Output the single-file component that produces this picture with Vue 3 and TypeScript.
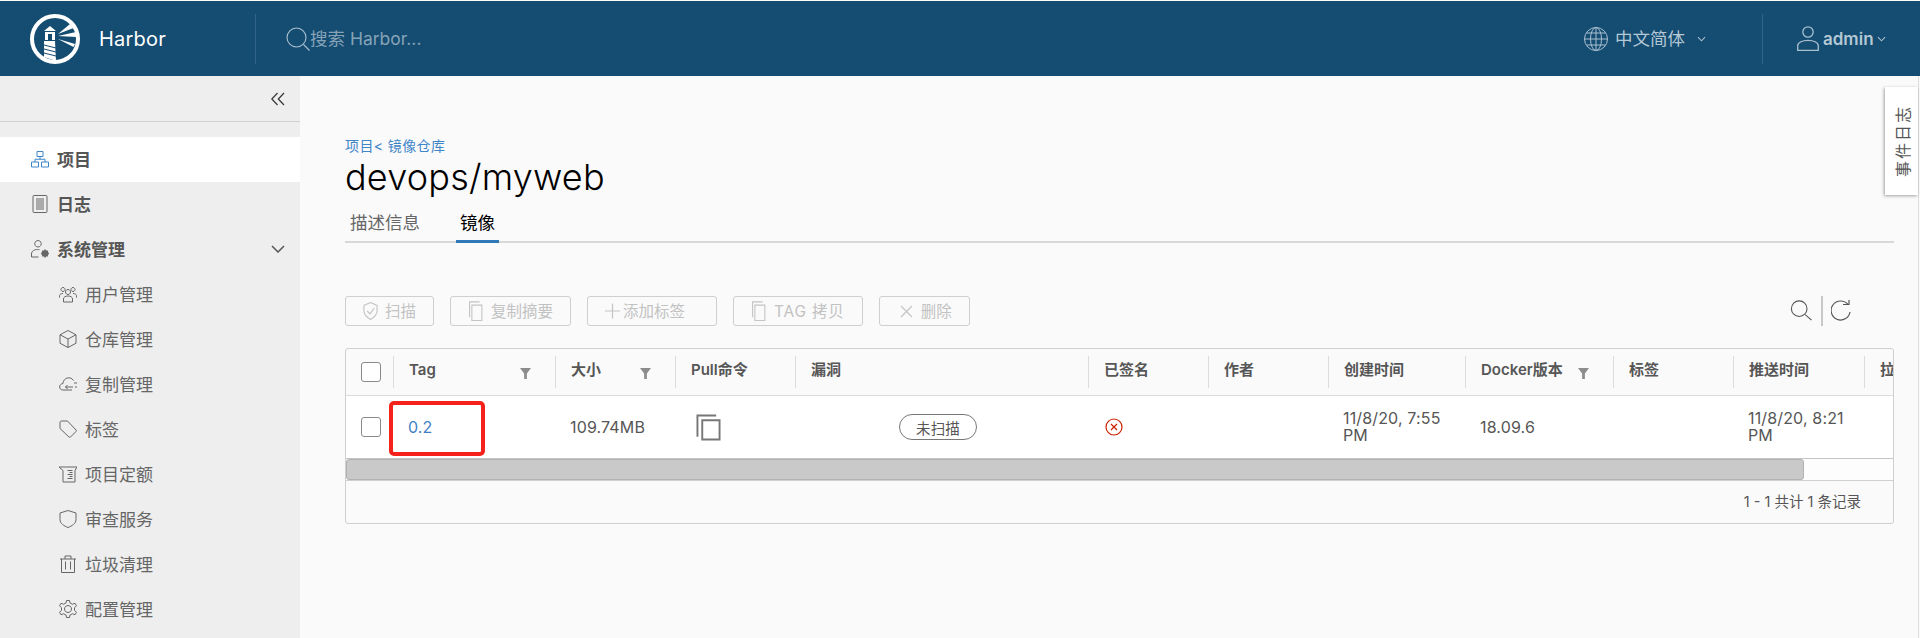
<script setup lang="ts">
interface NavItem {
  label: string
  icon: string
  sub?: boolean
  active?: boolean
  arrow?: boolean
}

interface Column {
  label: string
  width: number
  filter?: boolean
}

const navItems: NavItem[] = [
  { label: '项目', icon: 'project', active: true },
  { label: '日志', icon: 'log' },
  { label: '系统管理', icon: 'admin', arrow: true },
  { label: '用户管理', icon: 'users', sub: true },
  { label: '仓库管理', icon: 'box', sub: true },
  { label: '复制管理', icon: 'cloud', sub: true },
  { label: '标签', icon: 'tag', sub: true },
  { label: '项目定额', icon: 'quota', sub: true },
  { label: '审查服务', icon: 'shield', sub: true },
  { label: '垃圾清理', icon: 'trash', sub: true },
  { label: '配置管理', icon: 'gear', sub: true }
]

// 图标都按 36x36 画
const icons: Record<string, string[]> = {
  project: ['M12 3h12v10H12z', 'M1 24h14v10H1z', 'M21 24h14v10H21z', 'M8 24v-5.500h20V24', 'M18 13v5.500'],
  log: ['M6 1h24a2 2 0 0 1 2 2v30a2 2 0 0 1-2 2H6a2 2 0 0 1-2-2V3a2 2 0 0 1 2-2z', 'M10 8h16M10 12h16M10 16h16M10 20h16M10 24h16M10 28h16'],
  admin: ['M14 14a6.500 6.500 0 1 0-.01 0z', 'M1 34v-6c0-6 6-9 12-9 2 0 3 .2 4 .5M1 34h14'],
  users: ['M18 19a5 5 0 1 0-.01 0z', 'M9 34v-6c0-4 4-6 9-6s9 2 9 6v6z', 'M8 13a4 4 0 1 0-.01 0zM1 25v-4c0-2 3-4 7-4', 'M28 13a4 4 0 1 0-.01 0zM35 25v-4c0-2-3-4-7-4'],
  box: ['M18 1l16 8.500v17L18 35 2 26.500v-17z', 'M2 9.500L18 18l16-8.500M18 18v17'],
  cloud: ['M26 30H8c-9 0-9-12 0-13 0-11 15-16 21-6', 'M13 24h15M17 20l-4 4 4 4', 'M30 16h6M32 24h4'],
  tag: ['M2 5a3 3 0 0 1 3-3h12l17 18a2 2 0 0 1 0 3L23 34a2 2 0 0 1-3 0L2 17z', 'M8 8.500h.01'],
  quota: ['M0 4h36l-4 7v23H8V11z', 'M17 11h10M21 15h6M17 19h10M21 23h6M17 27h10'],
  shield: ['M18 1l16 5v13c0 8-8 13-16 16-8-3-16-8-16-16V6z'],
  trash: ['M2 8h32M12 8V2h12v6', 'M5 8v27h26V8', 'M13 13v16M23 13v16'],
  gear: ['M15 1h6l1 5 5 2.500 5-2 3 5-4 4v5l4 4-3 5-5-2-5 2.500-1 5h-6l-1-5-5-2.500-5 2-3-5 4-4v-5l-4-4 3-5 5 2L14 6z', 'M18 25a7 7 0 1 0-.01 0z']
}

const buttons = [
  { label: '扫描', icon: 'scan' },
  { label: '复制摘要', icon: 'copy' },
  { label: '添加标签', icon: 'plus' },
  { label: 'TAG 拷贝', icon: 'copy', wide: true },
  { label: '删除', icon: 'close' }
]

const columns: Column[] = [
  { label: 'Tag', width: 162, filter: true },
  { label: '大小', width: 120, filter: true },
  { label: 'Pull命令', width: 120 },
  { label: '漏洞', width: 293 },
  { label: '已签名', width: 120 },
  { label: '作者', width: 120 },
  { label: '创建时间', width: 137 },
  { label: 'Docker版本', width: 148, filter: true },
  { label: '标签', width: 120 },
  { label: '推送时间', width: 131 },
  { label: '拉取时间', width: 120 }
]

const colWidth = (c: Column) => ({ width: c.width + 'px' })
</script>

<template>
  <div class="page">
    <header class="topbar">
      <svg class="logo" viewBox="0 0 50 50">
        <circle cx="25" cy="25" r="23" fill="none" stroke="#fff" stroke-width="4" />
        <path d="M14 17l6-5 6 5z" fill="#fff" />
        <path fill-rule="evenodd" d="M15 18h10v8H15zM18 20v6h4v-6z" fill="#fff" />
        <path d="M14 27h11l1 20-12-4z" fill="#fff" />
        <path d="M14 31l12 3M14 35l12 3M14 39l12 3" stroke="#154c72" stroke-width="1" />
        <path d="M28 20l12-10 3.500 4zM28 22l18-4 1 5zM28 25l17 5-1.500 3z" fill="#fff" />
      </svg>
      <span class="brand">Harbor</span>
      <div class="search">
        <svg class="search-icon" viewBox="0 0 24 24">
          <circle cx="10.500" cy="10.500" r="9.500" />
          <path d="M17.500 17.500l6 6" />
        </svg>
        <span class="lift">搜索 Harbor...</span>
      </div>
      <div class="lang">
        <svg class="globe" viewBox="0 0 24 24">
          <circle cx="12" cy="12" r="11.500" />
          <ellipse cx="12" cy="12" rx="5.500" ry="11.500" />
          <path d="M12 .5v23M.5 12h23M2.500 6h19M2.500 18h19" />
        </svg>
        <span class="lift">中文简体</span>
        <svg class="caret lang-caret" viewBox="0 0 10 6"><path d="M1 1l4 4 4-4" /></svg>
      </div>
      <div class="account">
        <svg class="user-icon" viewBox="0 0 22 25">
          <circle cx="11" cy="6" r="5.200" />
          <path d="M.7 24.300v-4.500c0-3.500 5-5.500 10.300-5.500s10.300 2 10.300 5.500v4.500z" />
        </svg>
        <span>admin</span>
        <svg class="caret" viewBox="0 0 10 6"><path d="M1 1l4 4 4-4" /></svg>
      </div>
    </header>

    <div class="body">
      <aside class="sidebar">
        <div class="collapse">
          <svg viewBox="0 0 14 14"><path d="M6.500 1L.8 7l5.700 6M13 1L7.300 7l5.700 6" /></svg>
        </div>
        <nav class="nav">
          <div
            v-for="item in navItems"
            :key="item.label"
            class="nav-item"
            :class="{ active: item.active, sub: item.sub }"
          >
            <svg class="nav-icon" viewBox="0 0 36 36">
              <path v-for="d in icons[item.icon]" :key="d" :d="d" />
              <g v-if="item.icon === 'admin'" class="admin-gear">
                <circle cx="28" cy="27" r="5" />
                <path d="M28 19v3M28 32v3M20 27h3M33 27h3M22.500 21.500l2 2M31.500 30.500l2 2M33.500 21.500l-2 2M24.500 30.500l-2 2" />
              </g>
            </svg>
            <span>{{ item.label }}</span>
            <svg v-if="item.arrow" class="nav-arrow" viewBox="0 0 14 8"><path d="M1 1l6 6 6-6" /></svg>
          </div>
        </nav>
      </aside>

      <main class="content">
        <div class="crumb">项目&lt; 镜像仓库</div>
        <h1 class="title">devops/myweb</h1>
        <div class="tabs">
          <span class="tab">描述信息</span>
          <span class="tab current">镜像</span>
        </div>

        <div class="toolbar">
          <button v-for="b in buttons" :key="b.label" class="tool-btn" :class="[b.icon, { wide: b.wide }]">
            <svg v-if="b.icon === 'scan'" class="btn-icon" viewBox="0 0 16 20">
              <path d="M8 1l7 3v6c0 4-3.500 7-7 9-3.500-2-7-5-7-9V4z" />
              <path d="M4.500 10l3 3 4.500-6" />
            </svg>
            <svg v-else-if="b.icon === 'copy'" class="btn-icon" viewBox="0 0 15 22">
              <path d="M12 1H1v17" />
              <path d="M3.500 4.500h11v17h-11z" />
            </svg>
            <svg v-else-if="b.icon === 'plus'" class="btn-icon" viewBox="0 0 15 15">
              <path d="M7.500 0v15M0 7.500h15" />
            </svg>
            <svg v-else class="btn-icon small" viewBox="0 0 13 13">
              <path d="M1 1l11 11M12 1L1 12" />
            </svg>
            <span>{{ b.label }}</span>
          </button>
          <div class="tool-right">
            <svg class="tool-search" viewBox="0 0 24 24">
              <circle cx="9.500" cy="9.500" r="8.500" />
              <path d="M16 16l7 6" />
            </svg>
            <i class="tool-sep"></i>
            <svg class="tool-refresh" viewBox="0 0 20 22">
              <path d="M17 4.500A9.500 9.500 0 1 0 19 12" />
              <path d="M12 4.500h6V0" />
            </svg>
          </div>
        </div>

        <section class="grid">
          <div class="grid-head">
            <div class="check-cell"><span class="check"></span></div>
            <div v-for="c in columns" :key="c.label" class="head-cell" :style="colWidth(c)">
              <span>{{ c.label }}</span>
              <svg v-if="c.filter" class="filter" viewBox="0 0 12 12"><path d="M0 0h12L7.500 6v6h-3V6z" /></svg>
            </div>
          </div>
          <div class="grid-row">
            <div class="check-cell"><span class="check"></span></div>
            <div class="cell" :style="colWidth(columns[0])">
              <a class="tag-link">0.2</a>
              <span class="mark"></span>
            </div>
            <div class="cell" :style="colWidth(columns[1])">109.74MB</div>
            <div class="cell" :style="colWidth(columns[2])">
              <svg class="copy-big" viewBox="0 0 26 28">
                <path d="M21 1.500H1.500v22" />
                <path d="M6.500 6.500h18v20h-18z" />
              </svg>
            </div>
            <div class="cell scan-cell" :style="colWidth(columns[3])"><span class="pill">未扫描</span></div>
            <div class="cell" :style="colWidth(columns[4])">
              <svg class="unsigned" viewBox="0 0 18 18">
                <circle cx="9" cy="9" r="8" />
                <path d="M6 6l6 6M12 6l-6 6" />
              </svg>
            </div>
            <div class="cell" :style="colWidth(columns[5])"></div>
            <div class="cell date" :style="colWidth(columns[6])">11/8/20, 7:55 PM</div>
            <div class="cell" :style="colWidth(columns[7])">18.09.6</div>
            <div class="cell" :style="colWidth(columns[8])"></div>
            <div class="cell date" :style="colWidth(columns[9])">11/8/20, 8:21 PM</div>
          </div>
          <div class="scroll-track"><div class="scroll-thumb"></div></div>
          <div class="grid-foot">1 - 1 共计 1 条记录</div>
        </section>
      </main>

      <div class="event-tab"><span>事件日志</span></div>
    </div>
  </div>
</template>

<style scoped>
.page {
  height: 638px;
  overflow: hidden;
  display: flex;
  flex-direction: column;
  background: #fafafa;
  font-family: Inter, "Noto Sans CJK SC", sans-serif;
  color: #565656;
  box-sizing: border-box;
  padding-top: 1px;
}

.topbar {
  height: 75px;
  flex: none;
  background: #154c72;
  display: flex;
  align-items: center;
  color: #b4c8d5;
}
.lift {
  margin-bottom: 2px;
}
.logo {
  width: 50px;
  height: 50px;
  margin-left: 30px;
}
.brand {
  margin-left: 19px;
  width: 156px;
  color: #fff;
  font-size: 20px;
  letter-spacing: 0.2px;
}
.search {
  height: 50px;
  border-left: 1px solid #31628a;
  padding-left: 30px;
  display: flex;
  align-items: center;
  color: #86a3b7;
  font-size: 17.5px;
  flex: 1;
}
.search-icon {
  width: 24px;
  height: 24px;
  fill: none;
  stroke: #a9c0cf;
  stroke-width: 1.100;
}
.lang {
  display: flex;
  align-items: center;
  font-size: 17.5px;
  width: 178px;
}
.globe {
  width: 24px;
  height: 24px;
  fill: none;
  stroke: #a9c0cf;
  stroke-width: 1;
  margin-right: 7px;
}
.caret {
  width: 9px;
  height: 6px;
  fill: none;
  stroke: #a9c0cf;
  stroke-width: 1.200;
  margin-left: 3px;
}
.lang-caret {
  margin-left: 12px;
}
.account {
  height: 50px;
  width: 158px;
  border-left: 1px solid #31628a;
  padding-left: 34px;
  box-sizing: border-box;
  display: flex;
  align-items: center;
  font-size: 17px;
  font-weight: 600;
}
.user-icon {
  width: 22px;
  height: 25px;
  fill: none;
  stroke: #a9c0cf;
  stroke-width: 1.300;
  margin-right: 4px;
}

.body {
  flex: 1;
  display: flex;
  position: relative;
  min-height: 0;
}

.sidebar {
  width: 300px;
  flex: none;
  background: #eeeeee;
}
.collapse {
  height: 45px;
  border-bottom: 1px solid #cfcfcf;
  display: flex;
  align-items: center;
  justify-content: flex-end;
  padding-right: 15px;
}
.collapse svg {
  width: 14px;
  height: 14px;
  fill: none;
  stroke: #333;
  stroke-width: 1.200;
}
.nav {
  padding-top: 15px;
}
.nav-item {
  height: 45px;
  display: flex;
  align-items: center;
  padding: 0 0 2px 31px;
  box-sizing: border-box;
  font-size: 17px;
  font-weight: 700;
  color: #565656;
  position: relative;
}
.nav-item.active {
  background: #fff;
}
.nav-item.sub {
  font-weight: 400;
  padding-left: 59px;
  color: #666;
}
.nav-icon {
  width: 18px;
  height: 18px;
  fill: none;
  stroke: #666;
  stroke-width: 2;
  margin-right: 8px;
  flex: none;
}
.admin-gear {
  fill: #666;
  stroke-width: 3;
}
.nav-item.sub .nav-icon {
  margin-right: 8px;
}
.nav-item.active .nav-icon {
  stroke: #3f86c8;
}
.nav-arrow {
  position: absolute;
  right: 15px;
  top: 18px;
  width: 14px;
  height: 8px;
  fill: none;
  stroke: #565656;
  stroke-width: 1.500;
}

.content {
  flex: 1;
  min-width: 0;
  padding: 62px 24px 0 45px;
  margin-right: 1px;
  border-right: 1px solid #dedede;
}
.crumb {
  font-size: 14px;
  line-height: 16px;
  letter-spacing: 0.4px;
  color: #3f86c8;
}
.title {
  margin: 1px 0 0;
  font-size: 36px;
  font-weight: 300;
  line-height: 44px;
  color: #000;
  letter-spacing: 0.2px;
}
.tabs {
  margin-top: 5px;
  height: 39px;
  border-bottom: 2px solid #d8d8d8;
  box-sizing: border-box;
  display: flex;
  gap: 40px;
  padding-left: 5px;
}
.tab {
  font-size: 17.5px;
  line-height: 37px;
  height: 39px;
  box-sizing: border-box;
  color: #666;
}
.tab.current {
  color: #000;
  border-bottom: 3px solid #2f79b8;
  padding: 0 4px;
  margin-left: -4px;
}

.toolbar {
  margin-top: 53px;
  height: 30px;
  display: flex;
  gap: 16px;
  align-items: center;
}
.tool-btn {
  height: 30px;
  box-sizing: border-box;
  border: 1px solid #cfcfcf;
  border-radius: 3px;
  background: transparent;
  display: flex;
  align-items: center;
  gap: 8px;
  padding: 0 17px;
  font-family: inherit;
  font-size: 15.500px;
  color: #c2c2c2;
  white-space: nowrap;
}
.tool-btn span {
  margin-bottom: 2px;
}
.tool-btn.scan {
  gap: 7px;
}
.tool-btn.plus {
  gap: 3px;
  padding-right: 31px;
}
.tool-btn.wide {
  letter-spacing: 0.8px;
}
.btn-icon {
  width: 15px;
  height: 20px;
  fill: none;
  stroke: #c4c4c4;
  stroke-width: 1.200;
}
.btn-icon.small {
  width: 13px;
  height: 13px;
  margin-left: 3px;
}
.tool-right {
  margin-left: auto;
  display: flex;
  align-items: center;
  gap: 8px;
  padding-right: 43px;
}
.tool-search {
  width: 23px;
  height: 22px;
  fill: none;
  stroke: #555;
  stroke-width: 1.200;
}
.tool-sep {
  width: 2px;
  height: 30px;
  background: #c8c8c8;
}
.tool-refresh {
  width: 20px;
  height: 22px;
  fill: none;
  stroke: #555;
  stroke-width: 1.200;
}

.grid {
  margin-top: 22px;
  border: 1px solid #cfcfcf;
  border-radius: 3px;
  overflow: hidden;
  height: 176px;
  box-sizing: border-box;
  position: relative;
}
.grid-head {
  height: 46px;
  display: flex;
  align-items: center;
  border-bottom: 1px solid #dcdcdc;
  white-space: nowrap;
}
.check-cell {
  width: 47px;
  flex: none;
  padding-left: 15px;
  box-sizing: border-box;
  display: flex;
}
.check {
  width: 20px;
  height: 20px;
  box-sizing: border-box;
  border: 1px solid #8a8a8a;
  border-radius: 3px;
  background: #fff;
}
.head-cell {
  flex: none;
  height: 32px;
  border-left: 1px solid #dcdcdc;
  box-sizing: border-box;
  padding-left: 15px;
  font-size: 15px;
  font-weight: 600;
  line-height: 28px;
  position: relative;
}
.filter {
  position: absolute;
  right: 24px;
  top: 12px;
  width: 11px;
  height: 11px;
  fill: #8c8c8c;
}
.grid-row {
  height: 62px;
  display: flex;
  align-items: center;
  background: #fff;
  white-space: nowrap;
}
.cell {
  flex: none;
  padding-left: 15px;
  box-sizing: border-box;
  font-size: 16px;
  position: relative;
  height: 62px;
  display: flex;
  align-items: center;
  white-space: normal;
  letter-spacing: 0.15px;
}
.cell.date {
  line-height: 17px;
  padding-right: 10px;
}
.tag-link {
  color: #3f7fc4;
}
.mark {
  position: absolute;
  left: -4px;
  top: 5px;
  width: 96px;
  height: 55px;
  box-sizing: border-box;
  border: 4px solid #f5221b;
  border-radius: 5px;
}
.copy-big {
  width: 25px;
  height: 27px;
  margin-left: 6px;
  fill: none;
  stroke: #777;
  stroke-width: 2;
}
.scan-cell {
  padding-left: 104px;
}
.pill {
  width: 78px;
  height: 26px;
  border: 1px solid #777;
  border-radius: 13px;
  box-sizing: border-box;
  display: flex;
  align-items: center;
  justify-content: center;
  font-size: 14.500px;
}
.unsigned {
  width: 18px;
  height: 18px;
  margin-left: 2px;
  fill: none;
  stroke: #c92100;
  stroke-width: 1.200;
}
.scroll-track {
  height: 23px;
  background: #fdfdfd;
  border-top: 1px solid #c4c4c4;
  border-bottom: 1px solid #cfcfcf;
  box-sizing: border-box;
}
.scroll-thumb {
  width: 1458px;
  height: 100%;
  background: #c9c9c9;
  border: 1px solid #b2b2b2;
  border-radius: 3px;
  box-sizing: border-box;
}
.grid-foot {
  height: 43px;
  line-height: 41px;
  text-align: right;
  padding-right: 32px;
  font-size: 14.500px;
}

.event-tab {
  position: absolute;
  right: 2px;
  top: 11px;
  width: 33px;
  height: 108px;
  background: #fff;
  box-shadow: -1px 1px 3px rgba(0, 0, 0, 0.35);
  display: flex;
  align-items: center;
  justify-content: center;
  font-size: 16px;
  color: #555;
}
.event-tab span {
  transform: rotate(-90deg);
  white-space: nowrap;
  letter-spacing: 2px;
}
</style>

<style>
html,
body {
  margin: 0;
  overflow: hidden;
}
</style>
